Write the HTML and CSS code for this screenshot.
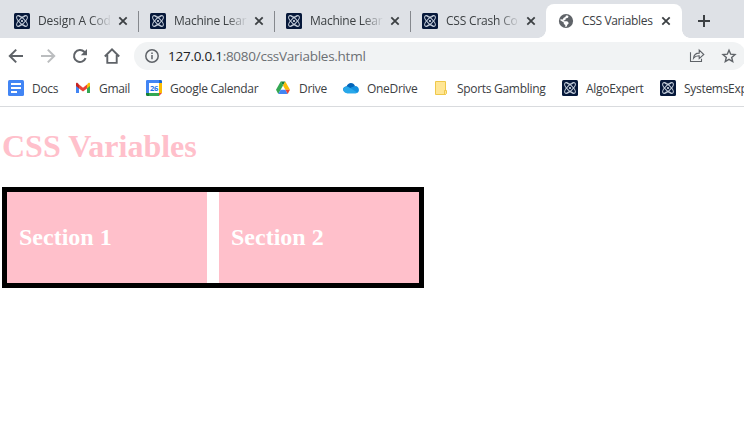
FILE: index.html
```html
<!DOCTYPE html>
<html lang="en">
<head>
<meta charset="utf-8">
<title>CSS Variables</title>
<link rel="stylesheet" href="styles.css">
</head>
<body>
<svg class="defs" width="0" height="0">
  <symbol id="algo" viewBox="0 0 16 16">
    <rect width="16" height="16" rx="1.5" fill="#06183a"/>
    <g fill="none" stroke="#c5cedb" stroke-width="1">
      <ellipse cx="8" cy="8" rx="7" ry="2.6" transform="rotate(45 8 8)"/>
      <ellipse cx="8" cy="8" rx="7" ry="2.6" transform="rotate(-45 8 8)"/>
      <path d="M4.5 3.2Q8 6 11.5 3.2M4.5 12.8Q8 10 11.5 12.8"/>
    </g>
    <circle cx="8" cy="8" r="1.1" fill="#dce3ec"/>
  </symbol>
  <symbol id="close" viewBox="0 0 10 10"><path d="M1.3 1.3l7.4 7.4M8.7 1.3L1.3 8.7" fill="none" stroke="#3c4043" stroke-width="1.8"/></symbol>
</svg>

<header class="browser">
  <div class="tabs">
    <div class="tab"><svg class="icon"><use href="#algo"/></svg><span class="title design">Design A Cod</span><svg class="close"><use href="#close"/></svg></div>
    <div class="tab"><svg class="icon"><use href="#algo"/></svg><span class="title machine">Machine Lear</span><svg class="close"><use href="#close"/></svg></div>
    <div class="tab"><svg class="icon"><use href="#algo"/></svg><span class="title machine">Machine Lear</span><svg class="close"><use href="#close"/></svg></div>
    <div class="tab last"><svg class="icon"><use href="#algo"/></svg><span class="title crash">CSS Crash Co</span><svg class="close"><use href="#close"/></svg></div>
    <div class="tab active">
      <svg class="icon" viewBox="0 0 16 16"><circle cx="8" cy="8" r="7.100" fill="#5f6368"/><path d="M9.500 2.500l1 .8-.5 1.500-2.300.7-.3 1.400-1.700.6v.8h3.500l1.300 1.200v1.300l-1.200.9-.5 1.900-1.500.3v-2l-1.500-.9v-1.500L2.300 7.300l.2-1.100 2.200.4 1-1.800 1.700-.7.500-1.500z" fill="#fff"/></svg>
      <span class="title current">CSS Variables</span><svg class="close"><use href="#close"/></svg>
    </div>
    <svg class="plus" viewBox="0 0 12 12"><path d="M6 0v12M0 6h12" stroke="#3c4043" stroke-width="2"/></svg>
  </div>

  <div class="toolbar">
    <svg class="tool" viewBox="0 0 16 16"><path d="M15 8H2M8.2 1.6L1.8 8l6.4 6.4" fill="none" stroke="#5f6368" stroke-width="2"/></svg>
    <svg class="tool" viewBox="0 0 16 16"><path d="M1 8h13M7.8 1.6L14.2 8l-6.4 6.4" fill="none" stroke="#bbbdbf" stroke-width="2"/></svg>
    <svg class="tool" viewBox="0 0 16 16"><path d="M13.6 10.2A6 6 0 1 1 12.3 3.8L14 5.5" fill="none" stroke="#5f6368" stroke-width="2"/><path d="M15 1v6.2H8.8z" fill="#5f6368"/></svg>
    <svg class="tool" viewBox="0 0 16 16"><path d="M.8 8.5L8 1.4l7.2 7.1M3.3 7v7.900h9.400V7" fill="none" stroke="#5f6368" stroke-width="1.9"/></svg>
    <div class="address">
      <svg class="info" viewBox="0 0 14 14"><circle cx="7" cy="7" r="6.2" fill="none" stroke="#5f6368" stroke-width="1.5"/><path d="M7 6v4.3M7 3.5v1.5" stroke="#5f6368" stroke-width="1.5"/></svg>
      <span class="url"><b>127.0.0.1</b>:8080/cssVariables.html</span>
      <svg class="share" viewBox="0 0 16 16"><path d="M1.500 4.300v9.200h11v-2.800M4.500 10.300c.3-3.600 2.500-5.200 5.700-5.200V2.100l4.600 4.400-4.600 4.100V7.800c-2.600-.1-4.400.7-5.700 2.500z" fill="none" stroke="#5f6368" stroke-width="1.1"/></svg>
      <svg class="star" viewBox="0 0 16 16"><path d="M8 2.200l1.700 4 4.300.4-3.300 2.800 1 4.200L8 11.400l-3.700 2.200 1-4.200L2 6.600l4.300-.4z" fill="none" stroke="#5f6368" stroke-width="1.4"/></svg>
    </div>
  </div>

  <nav class="bookmarks">
    <a class="mark docs"><svg class="icon" viewBox="0 0 16 16"><rect width="16" height="16" rx="1.5" fill="#4285f4"/><path d="M3 4h10M3 8h10M3 12h6" stroke="#fff" stroke-width="2"/></svg><span>Docs</span></a>
    <a class="mark gmail"><svg class="icon" viewBox="0 0 16 16"><path d="M1 4v9h3V6z" fill="#4285f4"/><path d="M15 4v9h-3V6z" fill="#34a853"/><path d="M4 4.500l4 3.200 4-3.200v4L8 11.500 4 8.500z" fill="#ea4335"/><path d="M1 6V4c0-1.700 1.500-1.700 3 .5v4z" fill="#c5221f"/><path d="M15 6V4c0-1.700-1.500-1.700-3 .5v4z" fill="#fbbc04"/></svg><span>Gmail</span></a>
    <a class="mark calendar"><svg class="icon" viewBox="0 0 16 16"><path d="M0 1.200Q0 0 1.200 0H13v3H3v10H0z" fill="#4285f4"/><path d="M13 0h1.800Q16 0 16 1.200V3h-3z" fill="#1967d2"/><path d="M13 3h3v10h-3z" fill="#fbbc04"/><path d="M3 13h10v3H3z" fill="#34a853"/><path d="M0 13h3v3H1.200Q0 16 0 14.800z" fill="#188038"/><path d="M13 13h3l-3 3z" fill="#ea4335"/><path d="M3 3h10v10H3z" fill="#fff"/><text x="8" y="10.900" text-anchor="middle" class="date">26</text></svg><span>Google Calendar</span></a>
    <a class="mark drive"><svg class="icon" viewBox="0 0 16 16"><path d="M5.700 1.500L1 9.800l2.300 4.200L8 5.600z" fill="#34a853"/><path d="M5.700 1.500h4.600L8 5.600z" fill="#188038"/><path d="M10.300 1.500L15 9.800h-4.600L8 5.600z" fill="#fbbc04"/><path d="M3.300 14l2.300-4.200h4.800l2.300 4.200z" fill="#4285f4"/><path d="M10.400 9.800H15L12.700 14z" fill="#ea4335"/></svg><span>Drive</span></a>
    <a class="mark onedrive"><svg class="icon" viewBox="0 0 16 16"><path d="M3.500 6.500C5 1.800 10.700 1.800 12 6.100L9 11 1 11.500C-1 9 .8 6.400 3.500 6.500z" fill="#0364b8"/><path d="M8 7.500l4-1.400c5 .1 5.300 7 .6 7.100H4z" fill="#1490df"/><path d="M.8 11.200C-1 8.500 1.500 5.800 4.700 6.600l9.600 5.900c-.5.500-1 .7-1.700.7H4c-1.500 0-2.500-.7-3.200-2z" fill="#28a8ea"/></svg><span>OneDrive</span></a>
    <a class="mark sports"><svg class="icon" viewBox="0 0 16 16"><path d="M.5 1.500h10v13H.5z" fill="#ffe695" stroke="#efc84a"/><path d="M9.500 10.500h2v3l-1 1h-1z" fill="#ffe695" stroke="#efc84a"/></svg><span>Sports Gambling</span></a>
    <a class="mark expert"><svg class="icon"><use href="#algo"/></svg><span>AlgoExpert</span></a>
    <a class="mark systems"><svg class="icon"><use href="#algo"/></svg><span>SystemsExp</span></a>
  </nav>
</header>

<main>
  <h1>CSS Variables</h1>
  <div class="container">
    <section><h2>Section 1</h2></section>
    <section><h2>Section 2</h2></section>
  </div>
</main>
</body>
</html>
```
FILE: styles.css
```css
:root {
  --primary: pink;
  --chrome: #dee1e6;
}
* { box-sizing: border-box; }
body {
  margin: 0;
  height: 433px;
  overflow: hidden;
  background: #fff;
}
.defs { position: absolute; }
svg { display: block; flex: none; }
.browser {
  font-family: "Open Sans", "Noto Sans", sans-serif;
  font-size: 12px;
  color: #3c4043;
  white-space: nowrap;
  overflow: hidden;
  border-bottom: 1px solid #d9dbde;
}
.icon { width: 16px; height: 16px; }

.tabs {
  display: flex;
  height: 38px;
  padding: 4px 0 0 2px;
  background: var(--chrome);
}
.tab {
  position: relative;
  flex: none;
  display: flex;
  align-items: center;
  width: 136px;
  height: 34px;
  padding-left: 12px;
}
.tab:not(.last):not(.active)::after {
  content: "";
  position: absolute;
  right: -1px;
  top: 7px;
  width: 1px;
  height: 21px;
  background: #85888d;
}
.title {
  width: 76px;
  margin-left: 8px;
  line-height: 18px;
  -webkit-mask-image: linear-gradient(90deg, #000 52px, transparent 74px);
  mask-image: linear-gradient(90deg, #000 52px, transparent 74px);
}
.close { width: 10px; height: 10px; margin-left: 4px; }
.active {
  background: #fff;
  border-radius: 8px 8px 0 0;
}
.active::before, .active::after {
  content: "";
  position: absolute;
  bottom: 0;
  width: 8px;
  height: 8px;
}
.active::before { left: -8px; background: radial-gradient(circle at 0 0, transparent 7.5px, #fff 8px); }
.active::after { right: -8px; background: radial-gradient(circle at 100% 0, transparent 7.5px, #fff 8px); }
.active .title { -webkit-mask-image: none; mask-image: none; }
.active .close { margin-left: 3px; }
.design { letter-spacing: -.1px; }
.machine { letter-spacing: -.25px; }
.crash { letter-spacing: -.2px; }
.current { letter-spacing: -.35px; }
.plus { width: 12px; height: 12px; margin: 11px 0 0 16px; }

.toolbar {
  display: flex;
  align-items: center;
  gap: 16px;
  height: 36px;
  padding-left: 8px;
}
.tool { width: 16px; height: 16px; }
.address {
  flex: none;
  display: flex;
  align-items: center;
  width: 612px;
  height: 28px;
  margin-left: -2px;
  padding-left: 11px;
  border-radius: 14px;
  background: #f1f3f4;
}
.info { width: 14px; height: 14px; }
.url {
  width: 521px;
  margin-left: 9px;
  color: #6b6f73;
  font-size: 13.5px;
  letter-spacing: -.26px;
}
.url b { color: #202124; font-weight: 400; }
.share { width: 16px; height: 16px; }
.star { width: 16px; height: 16px; margin-left: 16px; }

.bookmarks {
  display: flex;
  height: 32px;
  padding: 0 0 4px 8px;
}
.mark {
  flex: none;
  display: flex;
  align-items: center;
  gap: 8px;
  letter-spacing: -.3px;
}
.docs { width: 67px; }
.gmail { width: 71px; }
.calendar { width: 129px; }
.drive { width: 68px; }
.onedrive { width: 92px; }
.sports { width: 127px; gap: 6px; }
.expert { width: 98px; }
.systems { width: 110px; }
.date { font: bold 7.5px "Open Sans", sans-serif; fill: #1a73e8; }

main {
  padding: 21px 2px 0;
  font-family: "Liberation Serif", "Times New Roman", serif;
}
h1 {
  margin: 0 0 22px;
  color: var(--primary);
  font-size: 32px;
  line-height: 37px;
}
.container {
  display: flex;
  gap: 12px;
  width: 422px;
  border: 5px solid #000;
}
section {
  width: 200px;
  height: 91px;
  padding: 32px 12px;
  background: var(--primary);
}
h2 {
  margin: 0;
  color: #fff;
  font-size: 24px;
  line-height: 27px;
}
```
